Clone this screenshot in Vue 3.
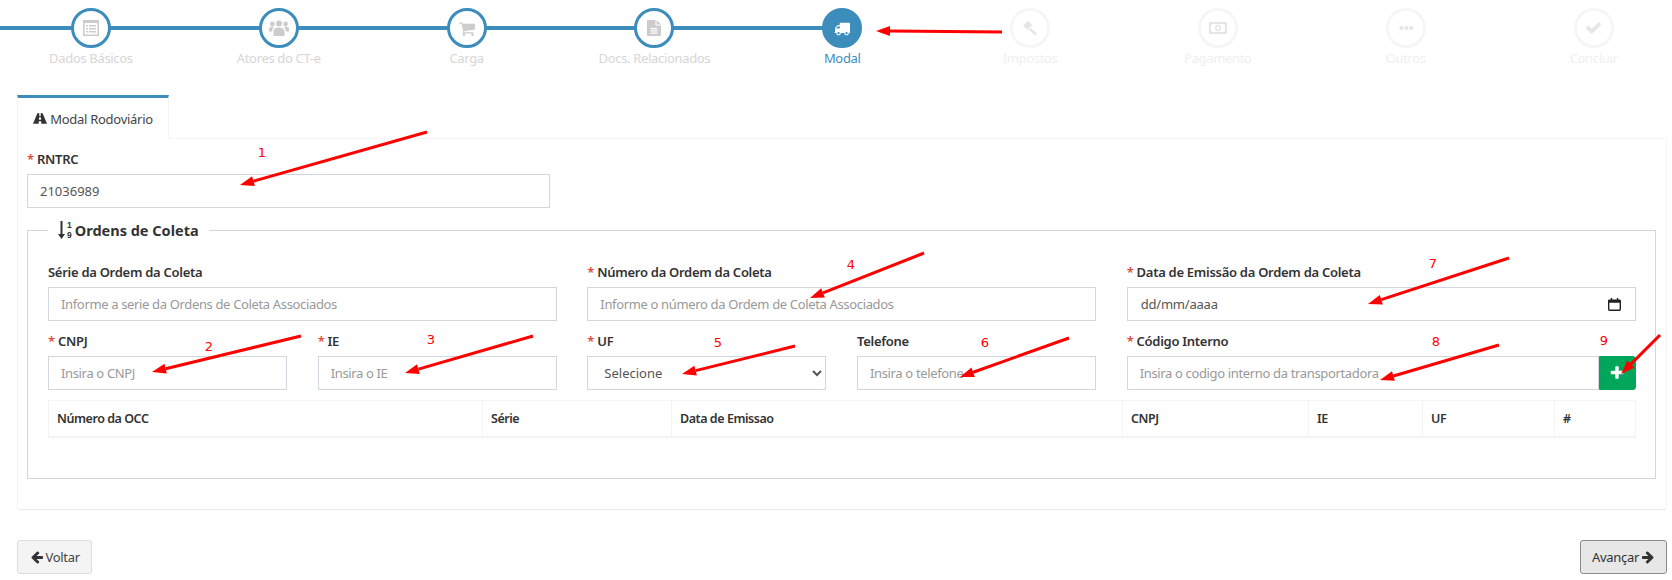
<template>
  <div class="page">
    <div class="stepper">
      <div
        v-for="(step, i) in steps"
        :key="step.label"
        class="step"
        :class="i < current ? 'done' : i === current ? 'active' : 'todo'"
      >
        <div class="node">
          <svg class="node-icon" :viewBox="step.icon.box" :width="step.icon.w" :height="step.icon.h">
            <path :d="step.icon.d" fill="currentColor" fill-rule="evenodd" />
          </svg>
        </div>
        <span class="step-label">{{ step.label }}</span>
      </div>
    </div>

    <div class="tabs">
      <div class="tab">
        <svg class="road" viewBox="0 0 16 12" width="14" height="11">
          <path fill="currentColor" fill-rule="evenodd" d="M5 0h2.300l-.2 3h1.800l-.2-3H11l5 12H9.500l-.2-3H6.700l-.2 3H0zM7 4.500h2l.2 3H6.800z" />
        </svg>
        Modal Rodoviário
      </div>
    </div>

    <div class="tab-body">
      <div class="field rntrc">
        <label><i>*</i> RNTRC</label>
        <input class="control" type="text" value="21036989">
      </div>

      <fieldset class="orders">
        <legend>
          <svg class="sort" viewBox="0 0 7 18" width="7" height="18">
            <path fill="currentColor" d="M2.500 0h2v13h2.500l-3.500 5-3.500-5h2.500z" />
          </svg>
          <span class="sort-nums"><b>1</b><b>9</b></span>
          <span class="legend-text">Ordens de Coleta</span>
        </legend>

        <div class="form-grid">
          <div class="field">
            <label>Série da Ordem da Coleta</label>
            <input class="control" type="text" placeholder="Informe a serie da Ordens de Coleta Associados">
          </div>
          <div class="field">
            <label><i>*</i> Número da Ordem da Coleta</label>
            <input class="control" type="text" placeholder="Informe o número da Ordem de Coleta Associados">
          </div>
          <div class="field">
            <label><i>*</i> Data de Emissão da Ordem da Coleta</label>
            <div class="control date">
              <span>dd/mm/aaaa</span>
              <svg viewBox="0 0 14 14" width="13" height="13">
                <path fill="#222" fill-rule="evenodd" d="M3 0h1.500v1.500h5V0H11v1.500h1.500A1.500 1.500 0 0 1 14 3v9.500a1.500 1.500 0 0 1-1.500 1.500h-11A1.500 1.500 0 0 1 0 12.500V3a1.500 1.500 0 0 1 1.500-1.500H3zM1.500 5v7.500h11V5z" />
              </svg>
            </div>
          </div>

          <div class="pair">
            <div class="field">
              <label><i>*</i> CNPJ</label>
              <input class="control" type="text" placeholder="Insira o CNPJ">
            </div>
            <div class="field">
              <label><i>*</i> IE</label>
              <input class="control" type="text" placeholder="Insira o IE">
            </div>
          </div>
          <div class="pair">
            <div class="field">
              <label><i>*</i> UF</label>
              <select class="control select">
                <option>Selecione</option>
              </select>
            </div>
            <div class="field">
              <label>Telefone</label>
              <input class="control" type="text" placeholder="Insira o telefone">
            </div>
          </div>
          <div class="field">
            <label><i>*</i> Código Interno</label>
            <div class="input-group">
              <input class="control" type="text" placeholder="Insira o codigo interno da transportadora">
              <button class="add" type="button">
                <svg viewBox="0 0 1792 1792" width="16" height="16">
                  <path fill="#fff" :d="paths.plus" />
                </svg>
              </button>
            </div>
          </div>
        </div>

        <table class="grid-table">
          <thead>
            <tr>
              <th v-for="col in columns" :key="col.title" :style="{ width: col.width + 'px' }">{{ col.title }}</th>
            </tr>
          </thead>
        </table>
      </fieldset>
    </div>

    <div class="actions">
      <button class="btn" type="button">
        <svg viewBox="0 0 1792 1792" width="14" height="14"><path fill="#333" :d="paths.left" /></svg>Voltar
      </button>
      <button class="btn next" type="button">
        Avançar<svg viewBox="0 0 1792 1792" width="14" height="14"><path fill="#333" :d="paths.right" /></svg>
      </button>
    </div>

    <!-- setas vermelhas de anotacao sobre o print -->
    <svg class="notes" viewBox="0 0 1672 580" width="1672" height="580">
      <g v-for="(a, i) in arrows" :key="i">
        <line :x1="a.x1" :y1="a.y1" :x2="a.bx" :y2="a.by" stroke="#f00" stroke-width="3" />
        <polygon :points="a.head" fill="#f00" />
      </g>
      <text v-for="n in numbers" :key="n.t" :x="n.x" :y="n.y" class="note-num">{{ n.t }}</text>
    </svg>
  </div>
</template>

<script setup>
const current = 4

const paths = {
  plus: 'M1600 736v192q0 40-28 68t-68 28h-416v416q0 40-28 68t-68 28h-192q-40 0-68-28t-28-68v-416h-416q-40 0-68-28t-28-68v-192q0-40 28-68t68-28h416v-416q0-40 28-68t68-28h192q40 0 68 28t28 68v416h416q40 0 68 28t28 68z',
  left: 'M1664 896v128q0 53-32.5 90.5t-84.5 37.5h-704l293 294q38 36 38 90t-38 90l-75 76q-37 37-90 37-52 0-91-37l-651-652q-37-37-37-90 0-52 37-91l651-650q38-38 91-38 52 0 90 38l75 74q38 38 38 91t-38 91l-293 293h704q52 0 84.5 37.5t32.5 90.5z',
  right: 'M1600 960q0 54-37 91l-651 651q-39 37-91 37-51 0-90-37l-75-75q-38-38-38-91t38-91l293-293h-704q-52 0-84.5-37.5t-32.5-90.5v-128q0-53 32.5-90.5t84.5-37.5h704l-293-294q-38-36-38-90t38-90l75-75q38-38 90-38 53 0 91 38l651 651q37 35 37 90z'
}

const steps = [
  { label: 'Dados Básicos', icon: { box: '0 0 16 16', w: 16, h: 16, d: 'M0 0h16v16H0zM1.500 3v11.500h13V3zM3 5h2v1.500H3zM6 5h7v1.500H6zM3 8h2v1.500H3zM6 8h7v1.500H6zM3 11h2v1.500H3zM6 11h7v1.500H6z' } },
  { label: 'Atores do CT-e', icon: { box: '0 0 20 16', w: 20, h: 16, d: 'M7 3.500a3 3 0 1 0 6 0a3 3 0 1 0-6 0zM1 4a2.400 2.400 0 1 0 4.800 0a2.400 2.400 0 1 0-4.800 0zM14.200 4a2.400 2.400 0 1 0 4.800 0a2.400 2.400 0 1 0-4.800 0zM4.500 16v-4.500C4.500 9 6.500 7.500 10 7.500s5.500 1.500 5.500 4v4.500zM0 11.500V9c0-1.500 1-2.200 3-2.200l2 .5C3.800 8.300 3.200 9.800 3.200 11.500zM20 11.500V9c0-1.500-1-2.200-3-2.200l-2 .5c1.200 1 1.800 2.500 1.800 4.200z' } },
  { label: 'Carga', icon: { box: '0 0 1664 1664', w: 16, h: 16, d: 'M640 1536q0 52-38 90t-90 38-90-38-38-90 38-90 90-38 90 38 38 90zm896 0q0 52-38 90t-90 38-90-38-38-90 38-90 90-38 90 38 38 90zm128-1088v512q0 24-16.500 42.500t-40.500 21.500l-1044 122q13 60 13 70 0 16-24 64h920q26 0 45 19t19 45-19 45-45 19h-1024q-26 0-45-19t-19-45q0-11 8-31.500t16-36 21.500-40 15.500-29.500l-177-823h-204q-26 0-45-19t-19-45 19-45 45-19h256q16 0 28.500 6.500t19.500 15.500 13 24.500 8 26 5.500 29.500 4.500 26h1201q26 0 45 19t19 45z' } },
  { label: 'Docs. Relacionados', icon: { box: '0 0 14 16', w: 14, h: 16, d: 'M0 0h8.500v5.500H14V16H0zM9.500 0L14 4.500H9.500zM3.500 8h7v1.200h-7zM3.500 10.300h7v1.200h-7zM3.500 12.600h7v1.200h-7z' } },
  { label: 'Modal', icon: { box: '0 64 1792 1664', w: 16, h: 15, d: 'M640 1408q0-52-38-90t-90-38-90 38-38 90 38 90 90 38 90-38 38-90zm-384-512h384v-256h-158q-13 0-22 9l-195 195q-9 9-9 22v30zm1280 512q0-52-38-90t-90-38-90 38-38 90 38 90 90 38 90-38 38-90zm256-1088v1024q0 15-4 26.500t-13.500 18.500-16.500 11.500-23.500 6-22.500 2-25.500 0-22.500-.5q0 106-75 181t-181 75-181-75-75-181h-384q0 106-75 181t-181 75-181-75-75-181h-64q-3 0-22.500.5t-25.500 0-22.500-2-23.500-6-16.500-11.500-13.500-18.500-4-26.500q0-26 19-45t45-19v-320q0-8-.5-35t0-38 2.500-34.500 6.500-37 14-30.500 22.500-30l198-198q19-19 50.500-32t58.500-13h160v-192q0-26 19-45t45-19h1024q26 0 45 19t19 45z' } },
  { label: 'Impostos', icon: { box: '0 0 16 16', w: 16, h: 16, d: 'M6 .5L10.500 5 5.500 10 1 5.500zM8.500 7.800l6.700 5.600-1.800 2.100-6.600-5.800z' } },
  { label: 'Pagamento', icon: { box: '0 0 18 12', w: 18, h: 12, d: 'M0 0h18v12H0zM3 2L2 3v6l1 1h12l1-1V3l-1-1zM9 2.500c2 0 3 1.500 3 3.500s-1 3.500-3 3.500-3-1.500-3-3.500 1-3.500 3-3.500zM9 4c-1 0-1.300 1-1.300 2s.3 2 1.300 2 1.300-1 1.300-2S10 4 9 4z' } },
  { label: 'Outros', icon: { box: '128 640 1472 384', w: 14, h: 4, d: 'M576 736v192q0 40-28 68t-68 28h-192q-40 0-68-28t-28-68v-192q0-40 28-68t68-28h192q40 0 68 28t28 68zm512 0v192q0 40-28 68t-68 28h-192q-40 0-68-28t-28-68v-192q0-40 28-68t68-28h192q40 0 68 28t28 68zm512 0v192q0 40-28 68t-68 28h-192q-40 0-68-28t-28-68v-192q0-40 28-68t68-28h192q40 0 68 28t28 68z' } },
  { label: 'Concluir', icon: { box: '120 300 1560 1240', w: 15, h: 12, d: 'M1671 566q0 40-28 68l-724 724-136 136q-28 28-68 28t-68-28l-136-136-362-362q-28-28-28-68t28-68l136-136q28-28 68-28t68 28l294 295 656-657q28-28 68-28t68 28l136 136q28 28 28 68z' } }
]

const columns = [
  { title: 'Número da OCC', width: 434 },
  { title: 'Série', width: 189 },
  { title: 'Data de Emissao', width: 451 },
  { title: 'CNPJ', width: 186 },
  { title: 'IE', width: 114 },
  { title: 'UF', width: 132 },
  { title: '#', width: 81 }
]

function arrow(x1, y1, x2, y2) {
  const len = Math.hypot(x2 - x1, y2 - y1)
  const ux = (x2 - x1) / len
  const uy = (y2 - y1) / len
  const bx = x2 - ux * 14
  const by = y2 - uy * 14
  const px = -uy * 5
  const py = ux * 5
  return {
    x1, y1, bx, by,
    head: `${x2},${y2} ${bx + px},${by + py} ${bx - px},${by - py}`
  }
}

const arrows = [
  arrow(1002, 32, 876, 31),
  arrow(427, 132, 240, 185),
  arrow(301, 336, 152, 372),
  arrow(533, 336, 405, 373),
  arrow(924, 253, 810, 298),
  arrow(795, 346, 682, 374),
  arrow(1069, 338, 960, 377),
  arrow(1509, 258, 1368, 304),
  arrow(1499, 345, 1380, 380),
  arrow(1660, 335, 1621, 374)
]

const numbers = [
  { t: '1', x: 262, y: 157 },
  { t: '2', x: 209, y: 351 },
  { t: '3', x: 431, y: 344 },
  { t: '4', x: 851, y: 269 },
  { t: '5', x: 718, y: 347 },
  { t: '6', x: 985, y: 347 },
  { t: '7', x: 1433, y: 268 },
  { t: '8', x: 1436, y: 346 },
  { t: '9', x: 1604, y: 345 }
]
</script>

<style>
html, body {
  margin: 0;
  background: #fff;
  overflow: hidden;
}
</style>

<style scoped>
.page {
  position: relative;
  width: 1672px;
  height: 580px;
  overflow: hidden;
  font-family: "Noto Sans", "Open Sans", sans-serif;
  font-size: 13px;
  color: #333;
}

.stepper {
  display: flex;
  width: 1690.5px;
  height: 95px;
  margin-left: -3px;
  padding-top: 8px;
  box-sizing: border-box;
}

.step {
  position: relative;
  flex: 1;
  display: flex;
  flex-direction: column;
  align-items: center;
}

.step.done::after {
  content: "";
  position: absolute;
  top: 18px;
  left: 50%;
  width: 100%;
  height: 4px;
  background: #3c8dbc;
}

.step:first-child::before {
  content: "";
  position: absolute;
  top: 18px;
  left: 0;
  width: 50%;
  height: 4px;
  background: #3c8dbc;
}

.node {
  position: relative;
  z-index: 1;
  width: 40px;
  height: 40px;
  box-sizing: border-box;
  border: 3.5px solid #3c8dbc;
  border-radius: 50%;
  background: #fff;
  color: #ccc;
  display: flex;
  align-items: center;
  justify-content: center;
}

.step.active .node {
  background: #3c8dbc;
  color: #fff;
}

.step.todo .node {
  border-color: #f6f6f6;
  color: #e6e6e6;
}

.step-label {
  line-height: 20px;
  letter-spacing: -0.33px;
  color: #d6d6d6;
}

.step.active .step-label {
  color: #3c8dbc;
}

.step.todo .step-label {
  color: #efefef;
}

.tabs {
  height: 43px;
  margin: 0 5px 0 17px;
  border-bottom: 1px solid #f4f4f4;
}

.tab {
  width: 152px;
  height: 44px;
  box-sizing: border-box;
  border: 1px solid #f4f4f4;
  border-top: 3px solid #3c8dbc;
  border-bottom: 0;
  background: #fff;
  position: relative;
  display: flex;
  align-items: center;
  justify-content: center;
  gap: 3px;
  letter-spacing: -0.27px;
  color: #444;
}

.road {
  color: #333;
}

.tab-body {
  height: 371px;
  margin: 0 5px 0 17px;
  padding: 11px 10px 0 9px;
  box-sizing: border-box;
  border: 1px solid #f4f4f4;
  border-bottom-color: #e8e8e8;
  border-top: 0;
  border-radius: 0 0 3px 3px;
}

.field {
  display: flex;
  flex-direction: column;
  min-width: 0;
}

.field label {
  font-weight: 600;
  line-height: 20px;
  margin-bottom: 5px;
  letter-spacing: -0.28px;
  color: #333;
}

.field label i {
  font-style: normal;
  color: #e04a3a;
}

.rntrc {
  width: 523px;
  margin-top: -1px;
}

.control {
  height: 34px;
  width: 100%;
  min-width: 0;
  box-sizing: border-box;
  border: 1px solid #d2d6de;
  padding: 6px 12px;
  font: inherit;
  color: #555;
  background: #fff;
  border-radius: 0;
  outline: none;
}

.control::placeholder {
  color: #999;
  letter-spacing: -0.35px;
}

.select {
  padding-left: 12px;
}

.date {
  display: flex;
  align-items: center;
  justify-content: space-between;
  padding-left: 13px;
  padding-right: 14px;
  letter-spacing: -0.2px;
}

.input-group {
  display: flex;
}

.add {
  flex: none;
  width: 37px;
  height: 34px;
  padding: 0;
  border: 1px solid #00a65a;
  border-radius: 0 3px 3px 0;
  background: #00a65a;
  display: flex;
  align-items: center;
  justify-content: center;
}

.orders {
  min-width: 0;
  margin: 10px 0 0;
  padding: 20px 19.5px 0 20px;
  height: 261px;
  box-sizing: border-box;
  border: 1px solid #d2d6de;
}

.orders legend {
  margin-left: 0;
  padding: 0 10px 0 10px;
  height: 24px;
  font-size: 14.5px;
  font-weight: 700;
  color: #333;
  display: flex;
  align-items: center;
}

.sort {
  flex: none;
  color: #333;
}

.sort-nums {
  display: flex;
  flex-direction: column;
  margin: 0 3px 0 2px;
  font-family: "Liberation Sans", sans-serif;
  font-size: 8.5px;
  line-height: 10px;
  color: #333;
}

.sort-nums b {
  display: block;
  height: 10px;
}

.legend-text {
  line-height: 24px;
}

.form-grid {
  display: grid;
  grid-template-columns: repeat(3, minmax(0, 1fr));
  column-gap: 30.5px;
  row-gap: 10px;
}

.pair {
  display: grid;
  grid-template-columns: repeat(2, minmax(0, 1fr));
  column-gap: 30.5px;
}

.grid-table {
  width: 100%;
  margin-top: 10px;
  border-collapse: collapse;
  table-layout: fixed;
  border: 1px solid #f4f4f4;
  border-bottom: 2px solid #f4f4f4;
}

.grid-table th {
  box-sizing: border-box;
  height: 36px;
  padding: 0 8px;
  text-align: left;
  font-size: 12.5px;
  font-weight: 600;
  letter-spacing: -0.45px;
  color: #333;
  border-left: 1px solid #f4f4f4;
}

.actions {
  display: flex;
  justify-content: space-between;
  margin: 30px 5px 0 17px;
}

.btn {
  height: 34px;
  padding: 0 11.5px;
  box-sizing: border-box;
  border: 1px solid #ddd;
  border-radius: 3px;
  background: #f4f4f4;
  font: inherit;
  letter-spacing: -0.3px;
  color: #444;
  display: flex;
  align-items: center;
  gap: 2px;
}

.btn.next {
  padding: 0 11px;
  background: #e7e7e7;
  border-color: #8c8c8c;
  color: #333;
}

.notes {
  position: absolute;
  top: 0;
  left: 0;
  pointer-events: none;
}

.note-num {
  font-family: "DejaVu Sans", sans-serif;
  font-size: 13px;
  text-anchor: middle;
  fill: #f00;
}
</style>
